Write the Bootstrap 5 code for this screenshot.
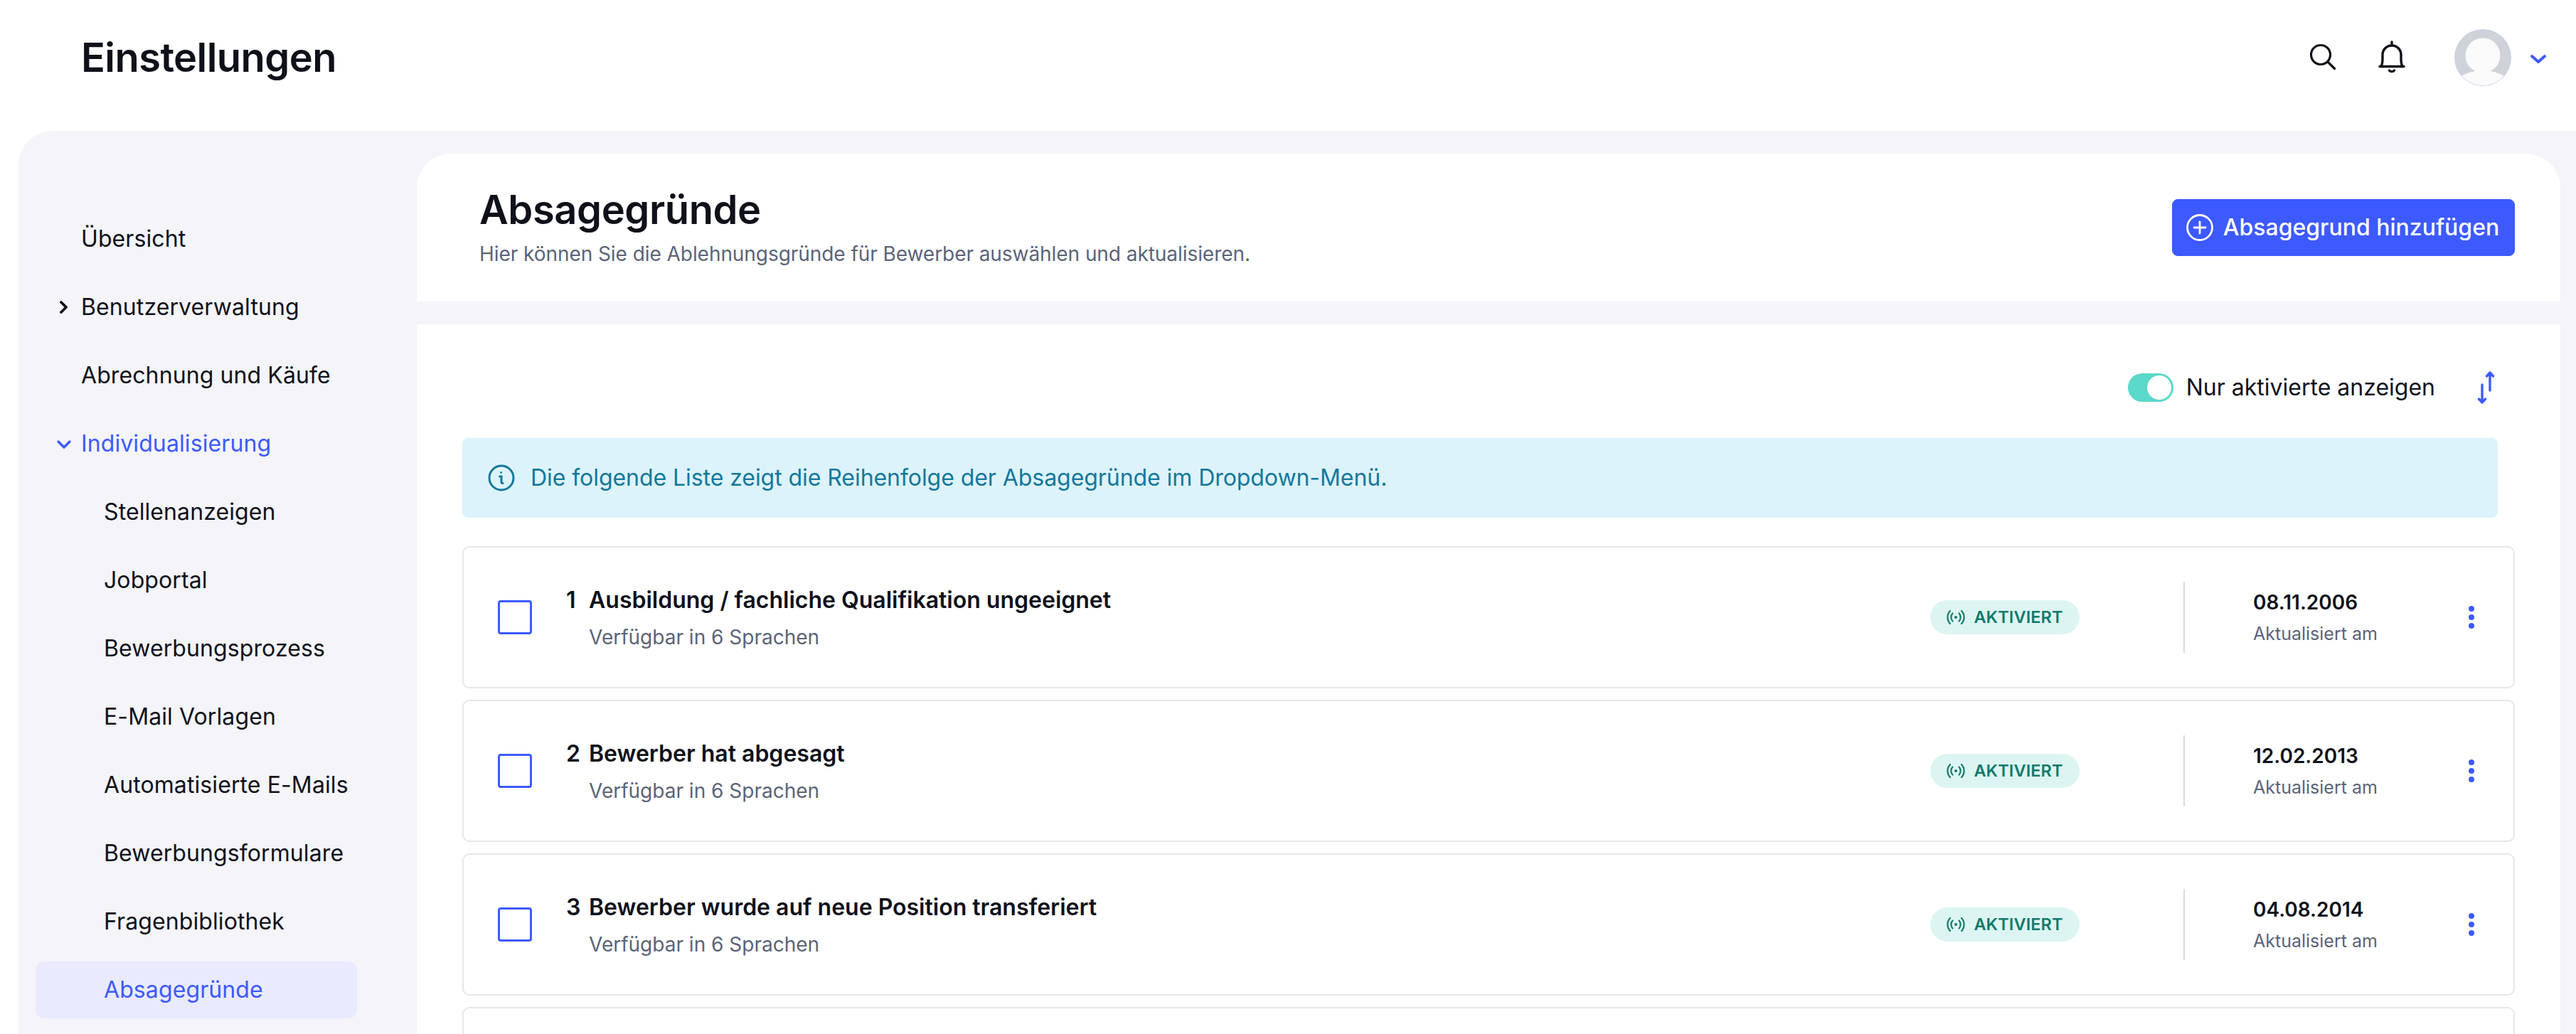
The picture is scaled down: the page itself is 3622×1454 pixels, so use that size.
<!DOCTYPE html>
<html lang="de">
<head>
<meta charset="utf-8">
<title>Einstellungen</title>
<link rel="stylesheet" href="https://cdn.jsdelivr.net/npm/bootstrap@5.3.0/dist/css/bootstrap.min.css">
<style>
:root{--ink:#0f111a;--blue:#3d5afe;--shade:#f4f4f9;--muted:#5b6478;}
html,body{height:1454px;overflow:hidden;}
body{font-family:"Inter","Liberation Sans",sans-serif;color:var(--ink);background:#fff;font-size:32px;}
.topbar{height:184px;padding:0 23px 22px 114px;}
.app-title{font-size:56px;font-weight:600;margin:0;line-height:1;letter-spacing:-.55px;}
.top-icons{width:350px;}
.avatar{width:80px;height:80px;border-radius:50%;display:block;}
.shell{margin-left:26px;background:var(--shade);border-top-left-radius:48px;padding:32px 22px 0 0;height:1270px;}
.side{width:560px;padding:80px 0 0 24px;flex:none;}
.side-link{display:flex;align-items:center;height:80px;width:452px;margin-bottom:16px;padding-left:64px;color:var(--ink);text-decoration:none;border-radius:12px;font-size:32px;letter-spacing:.1px;position:relative;}
.side-link.sub-link{padding-left:96px;}
.side-link.on{color:var(--blue);}
.side-link.sel{color:var(--blue);background:#e9eafd;}
.side-link svg{position:absolute;left:33px;top:31px;}
.main-col{flex:1 1 auto;min-width:0;}
.head-panel{height:208px;background:#fff;border-top-left-radius:48px;border-top-right-radius:48px;padding:0 64px 2px 88px;margin-bottom:32px;}
.page-title{font-size:56px;font-weight:600;line-height:1;margin:0 0 20px;letter-spacing:-.4px;}
.page-sub{font-size:28px;color:var(--muted);line-height:1;margin:0;letter-spacing:-.06px;}
.add-btn{--bs-btn-bg:var(--blue);--bs-btn-border-color:var(--blue);height:80px;width:482px;font-size:32px;font-weight:500;border-radius:8px;padding:0 2px 0 0;gap:14px;margin-top:2px;}
.body-panel{background:#fff;padding:0 64px;height:1100px;}
.tools{height:160px;padding-top:18px;}
.form-switch .switch-input{width:64px;height:40px;margin:0;border:0;background:radial-gradient(circle 17px at 44px 20px,#fff 16.5px,transparent 17.5px),#5ad8c9;background-position:0 0;background-size:auto;box-shadow:none;}
.form-switch .switch-input:checked{background:radial-gradient(circle 17px at 44px 20px,#fff 16.5px,transparent 17.5px),#5ad8c9;background-position:0 0;background-size:auto;}
.switch-wrap{padding:0;margin:0;min-height:0;gap:18px;}
.switch-wrap .form-check-label{font-size:32px;line-height:40px;}
.sort-ico{margin-left:58px;margin-right:26px;}
.note{--bs-alert-bg:#ddf3fb;--bs-alert-color:#13789b;--bs-alert-border-color:#ddf3fb;height:112px;width:2862px;margin:0 0 40px;padding:0 0 0 36px;font-size:32px;letter-spacing:-.06px;border:0;border-radius:8px;gap:22px;}
.reason{height:200px;margin-bottom:16px;border:2px solid #e5e7eb;border-radius:10px;padding:0 55px 0 48px;}
.tick{width:48px;height:48px;border:3.500px solid var(--blue);border-radius:4px;flex:none;margin-right:48px;}
.rnum{display:inline-block;width:32px;font-weight:600;}
.rtext{padding-top:2px;}
.rtitle{font-size:32px;font-weight:600;line-height:1;margin:0 0 22px;}
.rsub{font-size:28px;color:var(--muted);line-height:1;margin:0 0 0 32px;}
.state{width:210px;height:48px;background:#ddf5f2;color:#137a6b;border-radius:24px;font-size:23.500px;font-weight:600;letter-spacing:.1px;gap:12px;padding:0;flex:none;}
.rule{width:2px;height:100px;background:#d8dbe2;margin:0 96px 0 146px;flex:none;}
.date-col{width:232px;flex:none;}
.rdate{font-size:28px;font-weight:600;line-height:1;margin:0 0 18px;}
.rdate-sub{font-size:25px;color:var(--muted);line-height:1;margin:0;}
.dots{display:flex;flex-direction:column;gap:4px;margin-left:71px;}
.dots i{display:block;width:8px;height:8px;border-radius:50%;background:var(--blue);}
</style>
</head>
<body>
<header class="topbar d-flex align-items-center justify-content-between">
  <h1 class="app-title">Einstellungen</h1>
  <div class="top-icons d-flex align-items-center">
    <svg width="40" height="40" viewBox="0 0 40 40" fill="none" stroke="#0f111a" stroke-width="3.2" stroke-linecap="round" style="margin-left:-2px"><circle cx="16" cy="16" r="13.5"/><path d="M26 26l9.5 9.5"/></svg>
    <svg width="40" height="48" viewBox="0 0 40 48" fill="none" stroke="#0f111a" stroke-width="3.4" stroke-linecap="round" stroke-linejoin="round" style="margin-left:56px"><path d="M20 2v4"/><path d="M3 36.5h34"/><path d="M5 36.5c1.6-3 2-6 2-11V20a13 13 0 0 1 26 0v5.500c0 5 .4 8 2 11"/><path d="M16.500 42c1.500 2.200 5.500 2.200 7 0"/></svg>
    <svg class="avatar" style="margin-left:68px" viewBox="0 0 80 80"><defs><clipPath id="av"><circle cx="40" cy="40" r="39.500"/></clipPath></defs><circle cx="40" cy="40" r="40" fill="#ced2d9"/><g clip-path="url(#av)" fill="#fafafa"><circle cx="40" cy="37" r="24.500"/><ellipse cx="40" cy="90" rx="46" ry="32"/></g><circle cx="40" cy="40" r="39.600" fill="none" stroke="#c6cdf5" stroke-width=".8"/></svg>
    <svg width="24" height="16" viewBox="0 0 24 16" fill="none" stroke="#3d5afe" stroke-width="4" stroke-linecap="round" stroke-linejoin="round" style="margin-left:26px;margin-top:4px"><path d="M3 4l9 8 9-8"/></svg>
  </div>
</header>

<div class="shell d-flex">
  <nav class="side">
    <a class="side-link" href="#">Übersicht</a>
    <a class="side-link" href="#"><svg width="14" height="18" viewBox="0 0 14 18" fill="none" stroke="#0f111a" stroke-width="3.8" stroke-linecap="round" stroke-linejoin="round"><path d="M3 2l7 7-7 7"/></svg>Benutzerverwaltung</a>
    <a class="side-link" href="#">Abrechnung und Käufe</a>
    <a class="side-link on" href="#"><svg style="left:29px;top:34px" width="22" height="14" viewBox="0 0 22 14" fill="none" stroke="#3d5afe" stroke-width="3.4" stroke-linecap="round" stroke-linejoin="round"><path d="M3 3l8 8 8-8"/></svg>Individualisierung</a>
    <a class="side-link sub-link" href="#">Stellenanzeigen</a>
    <a class="side-link sub-link" href="#">Jobportal</a>
    <a class="side-link sub-link" href="#">Bewerbungsprozess</a>
    <a class="side-link sub-link" href="#">E-Mail Vorlagen</a>
    <a class="side-link sub-link" href="#">Automatisierte E-Mails</a>
    <a class="side-link sub-link" href="#">Bewerbungsformulare</a>
    <a class="side-link sub-link" href="#">Fragenbibliothek</a>
    <a class="side-link sub-link sel" href="#">Absagegründe</a>
  </nav>

  <main class="main-col">
    <section class="head-panel d-flex align-items-center justify-content-between">
      <div>
        <h2 class="page-title">Absagegründe</h2>
        <p class="page-sub">Hier können Sie die Ablehnungsgründe für Bewerber auswählen und aktualisieren.</p>
      </div>
      <button class="btn btn-primary add-btn d-flex align-items-center justify-content-center" type="button">
        <svg width="38" height="38" viewBox="0 0 38 38" fill="none" stroke="#fff" stroke-width="2.800" stroke-linecap="round"><circle cx="19" cy="19" r="17.500"/><path d="M19 11v16M11 19h16"/></svg>
        Absagegrund hinzufügen
      </button>
    </section>

    <section class="body-panel">
      <div class="tools d-flex align-items-center justify-content-end">
        <div class="form-check form-switch switch-wrap d-flex align-items-center">
          <input class="form-check-input switch-input" type="checkbox" role="switch" id="onlyActive" checked>
          <label class="form-check-label" for="onlyActive">Nur aktivierte anzeigen</label>
        </div>
        <svg class="sort-ico" width="28" height="48" viewBox="0 0 28 48" fill="none" stroke="#3d5afe" stroke-width="3.4" stroke-linecap="round" stroke-linejoin="round"><path d="M19 28V3M14.500 8l4.500-5 4.500 5"/><path d="M8 20v25M3.500 40l4.500 5 4.500-5"/></svg>
      </div>

      <div class="alert note d-flex align-items-center" role="alert">
        <svg width="38" height="38" viewBox="0 0 38 38" fill="none" stroke="#13789b" stroke-width="3" stroke-linecap="round"><circle cx="19" cy="19" r="17"/><path d="M16.500 17h2.500v8c0 1 .8 1.500 2 1.500"/><circle cx="18.500" cy="11.500" r="1.400" fill="#13789b" stroke="none"/></svg>
        <span>Die folgende Liste zeigt die Reihenfolge der Absagegründe im Dropdown-Menü.</span>
      </div>

      <div class="card reason flex-row align-items-center">
        <span class="tick"></span>
        <div class="rtext flex-grow-1"><p class="rtitle"><span class="rnum">1</span>Ausbildung / fachliche Qualifikation ungeeignet</p><p class="rsub">Verfügbar in 6 Sprachen</p></div>
        <span class="badge state d-flex align-items-center justify-content-center"><svg width="26" height="22" viewBox="0 0 26 22" fill="none" stroke="#137a6b" stroke-width="2.200" stroke-linecap="round"><circle cx="13" cy="11" r="2" fill="#137a6b" stroke="none"/><path d="M8.500 5.500a8 8 0 0 0 0 11M17.500 5.500a8 8 0 0 1 0 11M5 2a13 13 0 0 0 0 18M21 2a13 13 0 0 1 0 18"/></svg>AKTIVIERT</span>
        <span class="rule"></span>
        <div class="date-col"><p class="rdate">08.11.2006</p><p class="rdate-sub">Aktualisiert am</p></div>
        <span class="dots"><i></i><i></i><i></i></span>
      </div>

      <div class="card reason flex-row align-items-center">
        <span class="tick"></span>
        <div class="rtext flex-grow-1"><p class="rtitle"><span class="rnum">2</span>Bewerber hat abgesagt</p><p class="rsub">Verfügbar in 6 Sprachen</p></div>
        <span class="badge state d-flex align-items-center justify-content-center"><svg width="26" height="22" viewBox="0 0 26 22" fill="none" stroke="#137a6b" stroke-width="2.200" stroke-linecap="round"><circle cx="13" cy="11" r="2" fill="#137a6b" stroke="none"/><path d="M8.500 5.500a8 8 0 0 0 0 11M17.500 5.500a8 8 0 0 1 0 11M5 2a13 13 0 0 0 0 18M21 2a13 13 0 0 1 0 18"/></svg>AKTIVIERT</span>
        <span class="rule"></span>
        <div class="date-col"><p class="rdate">12.02.2013</p><p class="rdate-sub">Aktualisiert am</p></div>
        <span class="dots"><i></i><i></i><i></i></span>
      </div>

      <div class="card reason flex-row align-items-center">
        <span class="tick"></span>
        <div class="rtext flex-grow-1"><p class="rtitle"><span class="rnum">3</span>Bewerber wurde auf neue Position transferiert</p><p class="rsub">Verfügbar in 6 Sprachen</p></div>
        <span class="badge state d-flex align-items-center justify-content-center"><svg width="26" height="22" viewBox="0 0 26 22" fill="none" stroke="#137a6b" stroke-width="2.200" stroke-linecap="round"><circle cx="13" cy="11" r="2" fill="#137a6b" stroke="none"/><path d="M8.500 5.500a8 8 0 0 0 0 11M17.500 5.500a8 8 0 0 1 0 11M5 2a13 13 0 0 0 0 18M21 2a13 13 0 0 1 0 18"/></svg>AKTIVIERT</span>
        <span class="rule"></span>
        <div class="date-col"><p class="rdate">04.08.2014</p><p class="rdate-sub">Aktualisiert am</p></div>
        <span class="dots"><i></i><i></i><i></i></span>
      </div>

      <div class="card reason"></div>
    </section>
  </main>
</div>
<script src="https://cdn.jsdelivr.net/npm/bootstrap@5.3.0/dist/js/bootstrap.bundle.min.js"></script>
</body>
</html>
